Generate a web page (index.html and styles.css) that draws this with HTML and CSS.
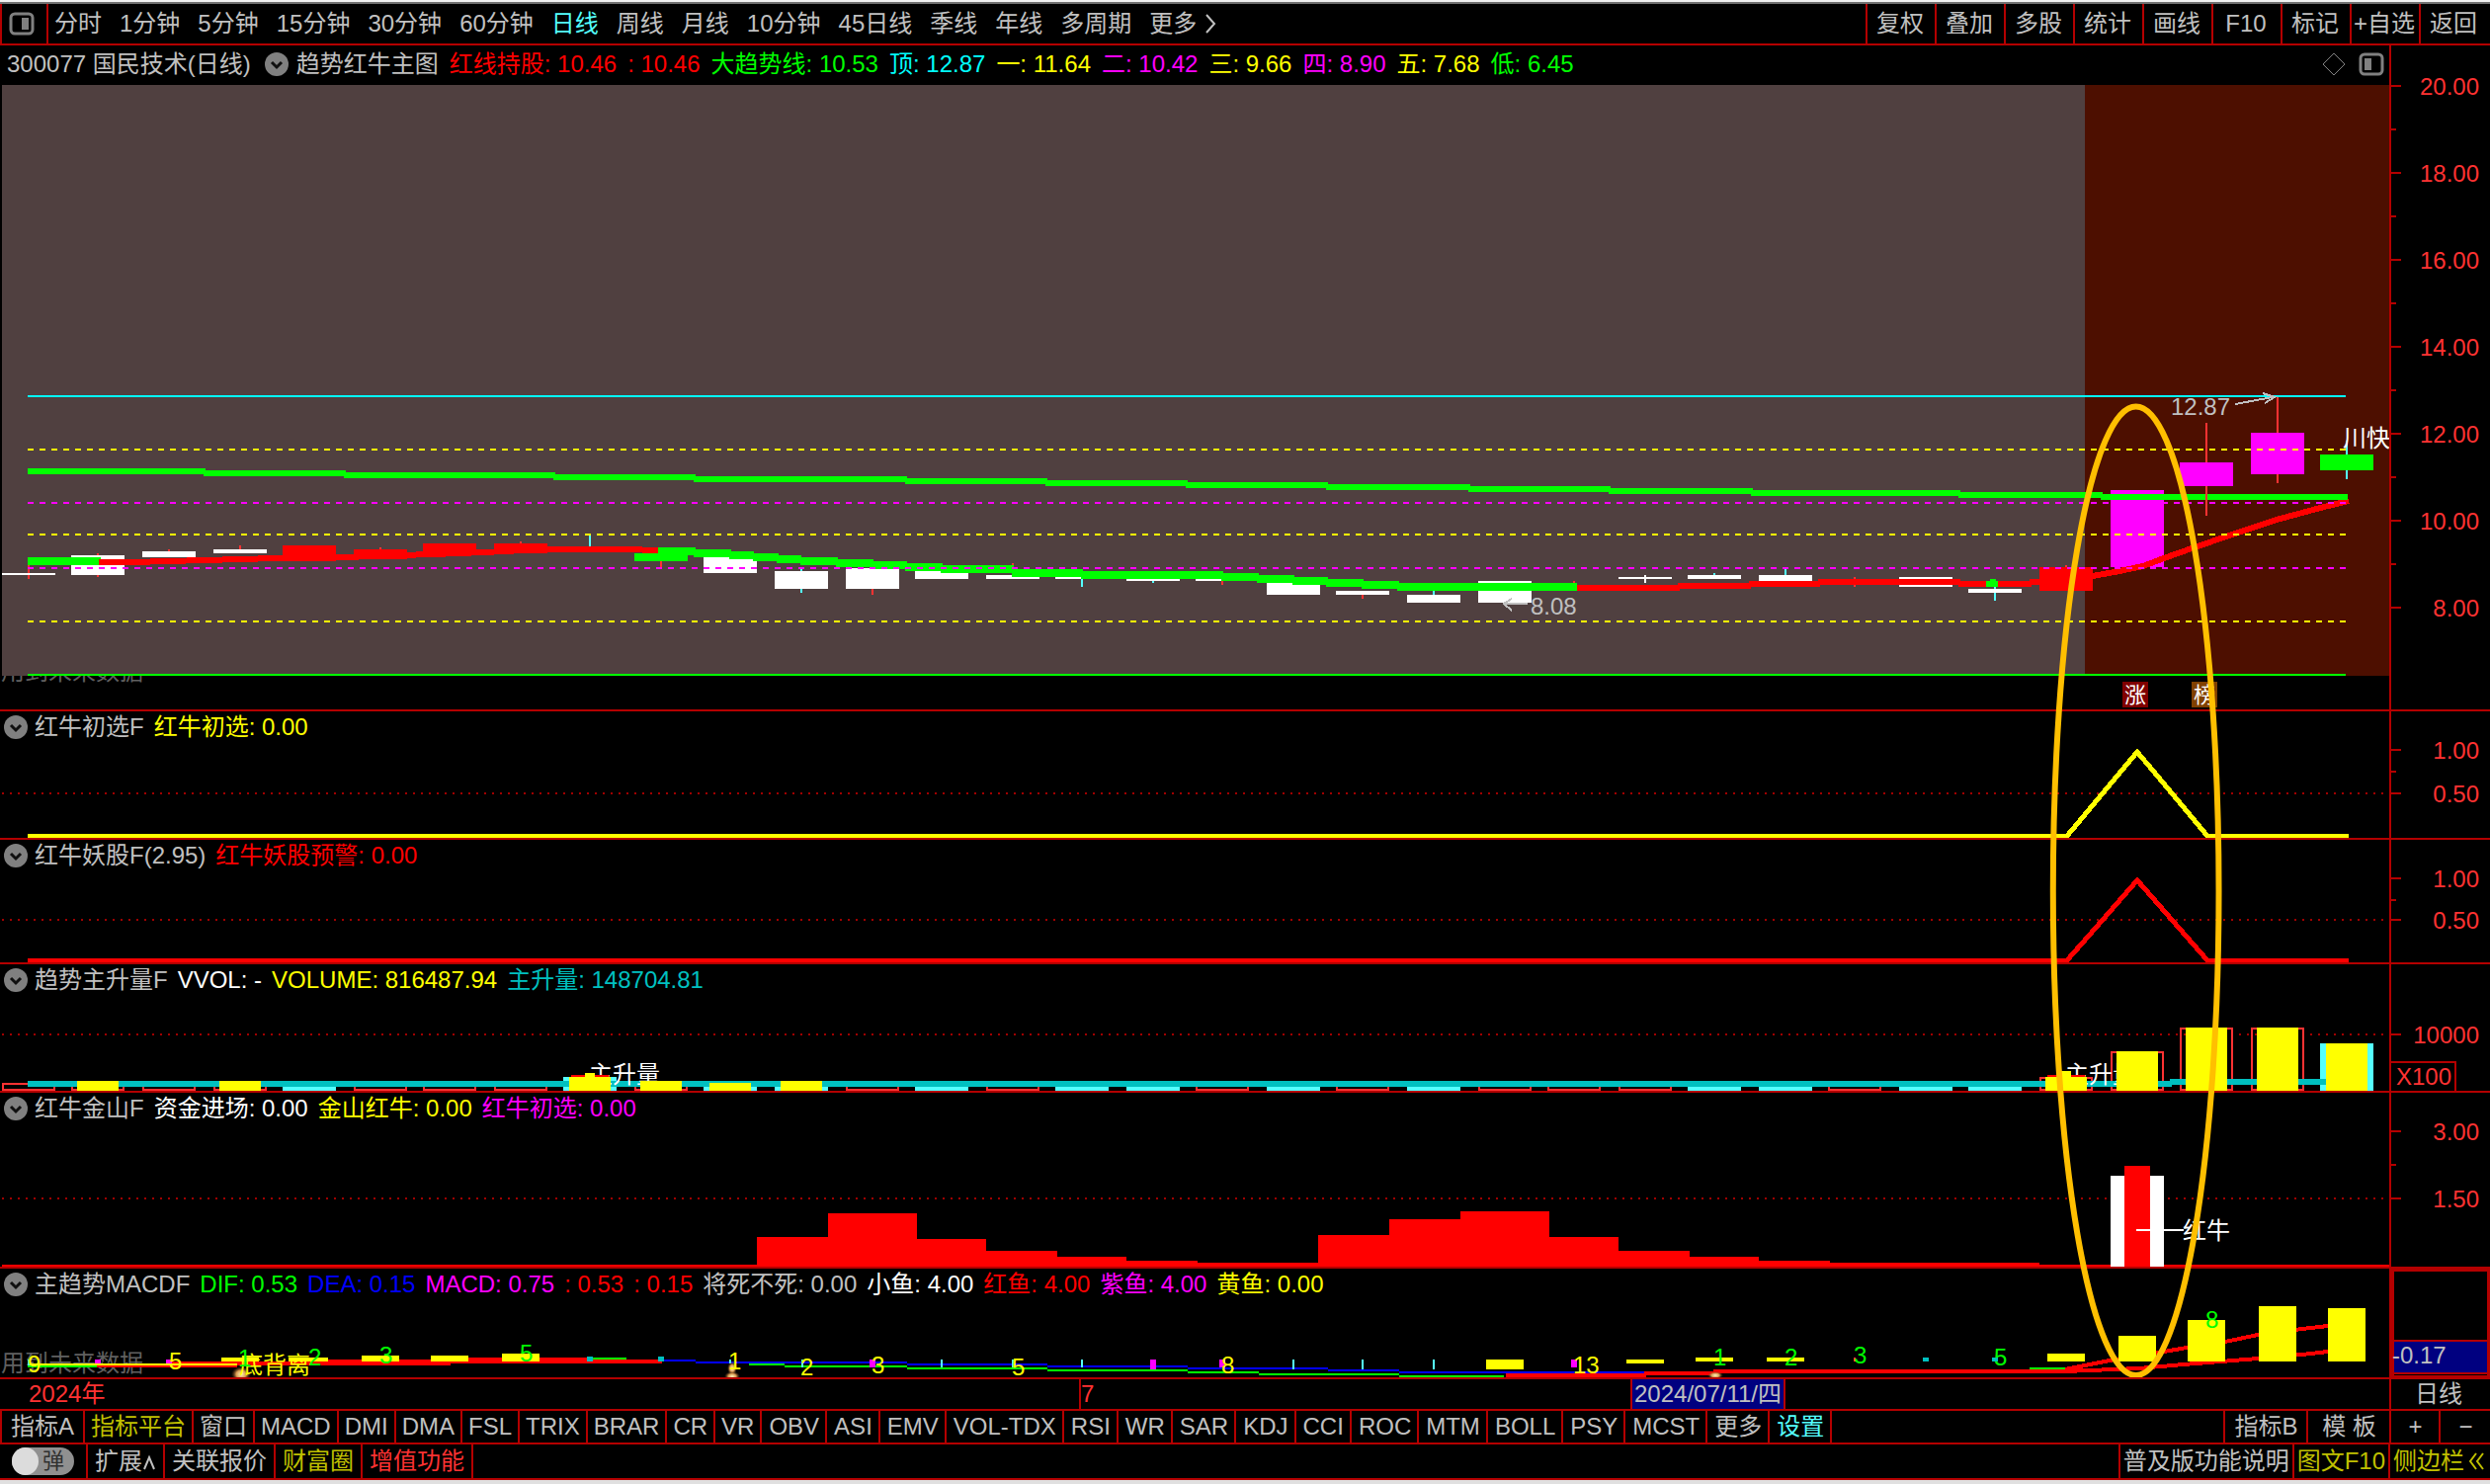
FILE: index.html
```html
<!DOCTYPE html>
<html lang="zh-CN">
<head>
<meta charset="utf-8">
<meta name="viewport" content="width=device-width, initial-scale=1">
<title>300077 国民技术 日线</title>
<link rel="stylesheet" href="styles.css">
</head>
<body>
<div class="app">
  <header class="toolbar">
    <button class="icon-cell" aria-label="侧栏">
      <svg class="dock-icon" viewBox="0 0 26 24"><rect x="2" y="2" width="22" height="20" rx="4"/><rect class="dock-fill" x="13" y="6" width="7" height="12"/></svg>
    </button>
    <nav class="periods" aria-label="周期">
      <button>分时</button><button>1分钟</button><button>5分钟</button><button>15分钟</button><button>30分钟</button><button>60分钟</button><button class="active">日线</button><button>周线</button><button>月线</button><button>10分钟</button><button>45日线</button><button>季线</button><button>年线</button><button>多周期</button><button class="more">更多<svg class="angle" viewBox="0 0 12 24"><path d="M2 3L10 12L2 21"/></svg></button>
    </nav>
    <div class="tools">
      <button>复权</button><button>叠加</button><button>多股</button><button>统计</button><button>画线</button><button>F10</button><button>标记</button><button>+自选</button><button>返回</button>
    </div>
  </header>

  <main class="charts">
    <section class="panel">
      <div class="plot">
        <div class="legend legend-main">
          <span>300077 国民技术(日线)</span>
          <button class="fold" aria-label="指标菜单"><svg viewBox="0 0 24 24"><circle cx="12" cy="12" r="12"/><path d="M7 10L12 15L17 10"/></svg></button>
          <span>趋势红牛主图</span>
          <span class="red">红线持股: 10.46</span><span class="red">: 10.46</span><span class="green">大趋势线: 10.53</span><span class="cyan">顶: 12.87</span><span class="yellow">一: 11.64</span><span class="magenta">二: 10.42</span><span class="yellow">三: 9.66</span><span class="magenta">四: 8.90</span><span class="yellow">五: 7.68</span><span class="green">低: 6.45</span>
          <span class="legend-tools">
            <svg class="diamond" viewBox="0 0 24 24"><path d="M12 1L23 12L12 23L1 12Z"/></svg>
            <svg class="dock-icon" viewBox="0 0 26 24"><rect x="2" y="2" width="22" height="20" rx="4"/><rect class="dock-fill" x="6" y="6" width="7" height="12"/></svg>
          </span>
        </div>
        <svg class="chart" viewBox="0 86 2418 632">
          <text class="mark" x="1" y="688">用到未来数据</text>
          <path fill="#504040" d="M2 86H2110V684H2z"/>
          <path fill="#4d0f00" d="M2110 86H2418V684H2110z"/>
          <!-- candle wicks -->
          <g class="wick-up"><path d="M29 568V586M99 560V584M171 556V560M243 552V558M385 554V560M527 548V556M669 560V575M883 590V602M1025 570V574M1237 586V592M1379 600V606M1593 588V592M1877 584V594M2091 572V580"/></g>
          <g class="wick-down"><path d="M597 542V554M811 576V600M1095 586V594M1167 586V590M1451 598V604M1735 580V584M1807 576V584M2019 594V608"/></g>
          <path stroke="#fff" stroke-width="2" d="M1665 582V590"/>
          <!-- flat session candles -->
          <path fill="#fff" d="M2 580h54v2H2zM72 562h54v20H72zM144 558h54v6h-54zM216 556h54v4h-54zM712 564h54v16h-54zM784 578h54v18h-54zM856 575h54v21h-54zM926 578h54v8h-54zM998 582h54v4h-54zM1068 582h54v4h-54zM1140 584h54v4h-54zM1210 584h54v4h-54zM1282 588h54v14h-54zM1352 598h54v4h-54zM1424 602h54v8h-54zM1496 588h54v22h-54zM1638 584h54v2h-54zM1708 582h54v4h-54zM1780 582h54v6h-54zM1922 584h54v10h-54zM1992 596h54v4h-54z"/>
          <path fill="#f00" d="M286 552h54v16h-54zM358 556h54v10h-54zM428 550h54v12h-54zM500 550h54v10h-54zM2064 574h54v24h-54z"/>
          <path fill="#0f0" d="M642 560h54v8h-54z"/>
          <path fill="#f0f" d="M2136 496h54v78h-54z"/>
          <!-- holding line -->
          <g class="line6">
            <path class="s-green8" d="M28 568H102"/>
            <path class="s-red" d="M100 569L134 569L207 567L280 565L350 564L404 562L438 561L490 559L530 557L562 556L634 556L666 557"/>
            <path class="s-green8" d="M666 558H704M702 560H740M738 562H763M762 564H788M786 566H811M810 568H848M846 570H884M882 572H918M916 574H954M952 576H1026M1024 580H1060M1058 580H1096M1094 582H1238M1236 584H1274M1272 586H1310M1308 588H1344M1342 590H1380M1378 592H1416M1414 594H1596"/>
            <path class="s-red" d="M1596 595H1700M1698 593H1772M1770 591H1842M1840 589H1984M1982 591H2056M2054 589H2066"/>
            <path class="s-red" d="M2118 583L2145 578L2169 573L2190 565L2221 554L2259 541L2304 526L2352 513L2377 507"/>
          </g>
          <path fill="#0f0" d="M2010 588h4v-2h6v2h2v6h-12z"/>
          <!-- long trend line -->
          <path class="s-green" d="M28 477H208M206 479H350M348 481H562M560 483H704M702 485H918M916 487H1060M1058 489H1202M1200 491H1344M1342 493H1488M1486 495H1630M1628 497H1774M1772 499H1984M1982 501H2128M2126 503H2376"/>
          <path stroke="#ff3232" stroke-width="2" d="M2233 428V522M2305 402V489"/>
          <path stroke="#54ffff" stroke-width="2" d="M2375 446V485"/>
          <path fill="#f0f" d="M2206 468h54v24h-54zM2278 438h54v42h-54z"/>
          <path fill="#0f0" d="M2348 460h54v16h-54z"/>
          <!-- price levels -->
          <g stroke-width="2" fill="none">
            <path stroke="#0ff" d="M28 401H2374"/>
            <path stroke="#ff0" stroke-dasharray="6 6" d="M28 455H2374M28 541H2374M28 629H2374"/>
            <path stroke="#f0f" stroke-dasharray="6 6" d="M28 509H2374M28 575H2374"/>
            <path stroke="#0f0" d="M28 683H2374"/>
          </g>
          <text class="silver" x="2197" y="420">12.87</text>
          <path class="arrow" d="M2262 409L2300 402M2290 398L2302 402L2292 408"/>
          <text class="silver" x="1549" y="622">8.08</text>
          <path class="arrow" d="M1546 611H1522M1530 606L1522 611L1530 618"/>
          <text class="white" x="2371" y="452">川快</text>
          <path fill="#800000" d="M2148 690h26v26h-26z"/><text class="badge-text" x="2150" y="711">涨</text>
          <path fill="#804000" d="M2218 690h26v26h-26z"/><text class="badge-text" x="2220" y="711">榜</text>
        </svg>
      </div>
      <div class="axis">
        <svg viewBox="0 46 100 672">
          <path class="tick" d="M0 87h10M0 175h10M0 263h10M0 351h10M0 439h10M0 527h10M0 615h10M0 131h5M0 219h5M0 307h5M0 395h5M0 483h5M0 571h5"/>
          <text x="89" y="96">20.00</text><text x="89" y="184">18.00</text><text x="89" y="272">16.00</text><text x="89" y="360">14.00</text><text x="89" y="448">12.00</text><text x="89" y="536">10.00</text><text x="89" y="624">8.00</text>
        </svg>
      </div>
    </section>

    <section class="panel">
      <div class="plot">
        <div class="legend">
          <button class="fold" aria-label="指标菜单"><svg viewBox="0 0 24 24"><circle cx="12" cy="12" r="12"/><path d="M7 10L12 15L17 10"/></svg></button>
          <span>红牛初选F</span><span class="yellow">红牛初选: 0.00</span>
        </div>
        <svg class="chart" viewBox="0 752 2418 96">
          <path class="dots" d="M2 803H2418"/>
          <path class="signal" stroke="#ff0" d="M28 846H2092L2163 761L2234 846H2377"/>
        </svg>
      </div>
      <div class="axis"><svg viewBox="0 720 100 128"><path class="tick" d="M0 759h10M0 803h10M0 781h5"/><text x="89" y="768">1.00</text><text x="89" y="812">0.50</text></svg></div>
    </section>

    <section class="panel">
      <div class="plot">
        <div class="legend">
          <button class="fold" aria-label="指标菜单"><svg viewBox="0 0 24 24"><circle cx="12" cy="12" r="12"/><path d="M7 10L12 15L17 10"/></svg></button>
          <span>红牛妖股F(2.95)</span><span class="red">红牛妖股预警: 0.00</span>
        </div>
        <svg class="chart" viewBox="0 882 2418 92">
          <path class="dots" d="M2 931H2418"/>
          <path class="signal" stroke="#f00" d="M28 972H2092L2163 891L2234 972H2377"/>
        </svg>
      </div>
      <div class="axis"><svg viewBox="0 850 100 124"><path class="tick" d="M0 889h10M0 931h10M0 911h5"/><text x="89" y="898">1.00</text><text x="89" y="940">0.50</text></svg></div>
    </section>

    <section class="panel">
      <div class="plot">
        <div class="legend">
          <button class="fold" aria-label="指标菜单"><svg viewBox="0 0 24 24"><circle cx="12" cy="12" r="12"/><path d="M7 10L12 15L17 10"/></svg></button>
          <span>趋势主升量F</span><span class="white">VVOL: -</span><span class="yellow">VOLUME: 816487.94</span><span class="teal">主升量: 148704.81</span>
        </div>
        <svg class="chart" viewBox="0 1008 2418 96">
          <path class="dots" d="M2 1047H2418"/>
          <g class="vol-up">
            <path d="M3 1097h52v6H3zM73 1097h52v6H73zM145 1097h52v6h-52zM217 1097h52v6h-52zM359 1097h52v6h-52zM429 1097h52v6h-52zM501 1097h52v6h-52zM643 1097h52v6h-52zM857 1097h52v6h-52zM999 1097h52v6h-52zM1211 1097h52v6h-52zM1353 1097h52v6h-52zM1497 1097h52v6h-52zM1567 1097h52v6h-52zM1639 1097h52v6h-52zM1851 1097h52v6h-52zM2065 1091h52v12h-52zM2137 1065h52v38h-52zM2207 1041h52v62h-52zM2279 1041h52v62h-52z"/>
          </g>
          <path fill="#54ffff" d="M286 1098h54v6h-54zM570 1090h54v14h-54zM712 1098h54v6h-54zM784 1098h54v6h-54zM926 1098h54v6h-54zM1068 1098h54v6h-54zM1140 1098h54v6h-54zM1282 1098h54v6h-54zM1424 1098h54v6h-54zM1708 1098h54v6h-54zM1780 1098h54v6h-54zM1922 1098h54v6h-54zM1992 1098h54v6h-54zM2348 1056h54v48h-54z"/>
          <path stroke="#00c0c0" stroke-width="6" d="M28 1097H2198M2196 1095H2356"/>
          <text class="white" x="596" y="1096">主升量</text>
          <text class="white" x="2090" y="1096">主升量</text>
          <path fill="#f00" d="M578 1088h38v3h-38zM2072 1088h38v3h-38z"/>
          <path fill="#ff0" d="M78 1094h42v10H78zM222 1094h42v10h-42zM576 1090h16v-4h10v4h16v14h-42zM648 1094h42v10h-42zM718 1096h42v8h-42zM790 1094h42v10h-42zM2070 1090h16v-6h10v6h16v14h-42zM2142 1064h42v40h-42zM2212 1040h42v64h-42zM2284 1040h42v64h-42zM2354 1056h42v48h-42z"/>
        </svg>
      </div>
      <div class="axis"><svg viewBox="0 976 100 128"><path class="tick" d="M0 1047h10M0 1075h65v30"/><text x="89" y="1056">10000</text><text x="61" y="1098">X100</text></svg></div>
    </section>

    <section class="panel">
      <div class="plot">
        <div class="legend">
          <button class="fold" aria-label="指标菜单"><svg viewBox="0 0 24 24"><circle cx="12" cy="12" r="12"/><path d="M7 10L12 15L17 10"/></svg></button>
          <span>红牛金山F</span><span class="white">资金进场: 0.00</span><span class="yellow">金山红牛: 0.00</span><span class="magenta">红牛初选: 0.00</span>
        </div>
        <svg class="chart" viewBox="0 1138 2418 144">
          <path class="dots" d="M2 1213H2418"/>
          <path fill="#f00" d="M2 1282V1280H766V1252H838V1228H928V1254H998V1266H1070V1272H1140V1276H1212V1278H1334V1250H1406V1234H1478V1226H1568V1252H1638V1266H1710V1272H1780V1276H1852V1278H2064V1280H2418V1282z"/>
          <path fill="#fff" d="M2136 1190h54v92h-54z"/>
          <path fill="#f00" d="M2150 1180h26v102h-26z"/>
          <path stroke="#fff" stroke-width="2" d="M2162 1245H2210"/>
          <text class="white" x="2209" y="1254">红牛</text>
        </svg>
      </div>
      <div class="axis"><svg viewBox="0 1106 100 176"><path class="tick" d="M0 1145h10M0 1213h10M0 1179h5"/><text x="89" y="1154">3.00</text><text x="89" y="1222">1.50</text></svg></div>
    </section>

    <section class="panel">
      <div class="plot">
        <div class="legend">
          <button class="fold" aria-label="指标菜单"><svg viewBox="0 0 24 24"><circle cx="12" cy="12" r="12"/><path d="M7 10L12 15L17 10"/></svg></button>
          <span>主趋势MACDF</span><span class="green">DIF: 0.53</span><span class="blue">DEA: 0.15</span><span class="magenta">MACD: 0.75</span><span class="red">: 0.53</span><span class="red">: 0.15</span><span>将死不死: 0.00</span><span class="white">小鱼: 4.00</span><span class="red">红鱼: 4.00</span><span class="magenta">紫鱼: 4.00</span><span class="yellow">黄鱼: 0.00</span>
        </div>
        <svg class="chart" viewBox="0 1316 2418 78">
          <defs><radialGradient id="spark"><stop offset="0" stop-color="#fff6c0"/><stop offset=".5" stop-color="#d89a50"/><stop offset="1" stop-color="#5a2a10" stop-opacity="0"/></radialGradient></defs>
          <text class="mark" x="1" y="1388">用到未来数据</text>
          <g fill="none" stroke-width="2">
            <path stroke="#0f0" d="M28 1383H98M600 1375H634M758 1381H794M794 1383H918M918 1385H1060M1060 1387H1202M1202 1389H1274M1274 1391H1416M1416 1393H1522M2054 1385H2092"/>
            <path stroke="#f00" d="M98 1383H240M172 1379H240"/>
            <path stroke="#00f" d="M670 1377H704M704 1379H918M918 1381H1060M1060 1383H1202M1202 1385H1344M1344 1387H1416M1416 1389H1664"/>
            <path stroke="#ff0" d="M28 1381H240"/>
          </g>
          <path fill="#f00" d="M240 1378H310V1376H474V1374H600V1376H670V1380H456V1382H240zM1524 1390H1664V1388H1734V1386H2092V1390H1734V1392H1666V1394H1524z"/>
          <g fill="none" stroke="#f00" stroke-width="4">
            <path d="M2090 1386L2135 1377L2190 1368L2213 1364L2257 1357L2285 1351L2330 1345L2356 1342"/>
            <path d="M2090 1388L2164 1385L2210 1381L2260 1377L2285 1375L2330 1371L2356 1368"/>
          </g>
          <path fill="#ff0" d="M224 1374h38v4h-38zM292 1374h40v4h-40zM366 1372h38v6h-38zM436 1372h38v6h-38zM508 1370h38v8h-38zM1504 1376h38v10h-38zM1646 1376h38v4h-38zM1716 1374h38v4h-38zM1788 1374h38v4h-38zM2072 1370h38v8h-38zM2144 1352h38v26h-38zM2214 1336h38v42h-38zM2286 1322h38v56h-38zM2356 1324h38v54h-38z"/>
          <path fill="#f0f" d="M96 1376h6v4h-6zM168 1376h6v4h-6zM880 1376h6v8h-6zM1164 1376h6v10h-6zM1234 1376h6v8h-6zM1590 1376h6v8h-6z"/>
          <path fill="#54ffff" d="M28 1376h2v6h-2zM738 1376h2v4h-2zM811 1376h2v8h-2zM952 1376h2v8h-2zM1024 1376h2v8h-2zM1094 1376h2v8h-2zM1308 1376h2v10h-2zM1378 1376h2v10h-2zM1450 1376h2v10h-2z"/>
          <path fill="#00c0c0" d="M594 1373h6v5h-6zM666 1373h6v5h-6zM1946 1374h6v4h-6zM2016 1374h6v4h-6z"/>
          <path fill="#ff3232" d="M1876 1374h2v4h-2z"/>
          <g fill="url(#spark)"><ellipse cx="244" cy="1391" rx="10" ry="8"/><ellipse cx="741" cy="1385" rx="5" ry="7"/><ellipse cx="741" cy="1393" rx="8" ry="5"/><ellipse cx="1736" cy="1392" rx="8" ry="4"/></g>
          <g class="yellow"><text x="28" y="1389">9</text><text x="171" y="1386">5</text><text x="242" y="1390">底背离</text><text x="737" y="1386">1</text><text x="810" y="1392">2</text><text x="882" y="1390">3</text><text x="1024" y="1392">5</text><text x="1236" y="1390">8</text><text x="1592" y="1390">13</text></g>
          <g class="green"><text x="241" y="1383">1</text><text x="312" y="1382">2</text><text x="384" y="1380">3</text><text x="526" y="1378">5</text><text x="1734" y="1382">1</text><text x="1806" y="1382">2</text><text x="1876" y="1380">3</text><text x="2018" y="1382">5</text><text x="2232" y="1344">8</text></g>
        </svg>
      </div>
      <div class="axis"><svg viewBox="0 1284 100 110"><rect x="1" y="1285" width="97" height="108" fill="none" stroke="#b40000" stroke-width="3"/><path fill="#000080" stroke="#b40000" stroke-width="2" d="M2 1357H98V1390H2z"/><text class="silver start" x="1" y="1380">-0.17</text></svg></div>
    </section>

    <svg class="annotation" viewBox="0 44 2520 1352" aria-hidden="true"><ellipse cx="2163" cy="903" rx="84" ry="491"/></svg>
  </main>

  <div class="timeline">
    <span class="year">2024年</span><span class="month">7</span><span class="cursor-date">2024/07/11/四</span><span class="period-name">日线</span>
  </div>

  <nav class="tabs" aria-label="指标">
    <button>指标A</button><button class="olive">指标平台</button><button>窗口</button><button>MACD</button><button>DMI</button><button>DMA</button><button>FSL</button><button>TRIX</button><button>BRAR</button><button>CR</button><button>VR</button><button>OBV</button><button>ASI</button><button>EMV</button><button>VOL-TDX</button><button>RSI</button><button>WR</button><button>SAR</button><button>KDJ</button><button>CCI</button><button>ROC</button><button>MTM</button><button>BOLL</button><button>PSY</button><button>MCST</button><button>更多</button><button class="aqua">设置</button>
    <span class="spacer"></span>
    <button class="wide">指标B</button><button class="wide">模 板</button><button class="zoom-btn" aria-label="放大">+</button><button class="zoom-btn" aria-label="缩小">−</button>
  </nav>

  <footer class="status">
    <label class="toggle"><input type="checkbox"><span class="knob"></span><span>弹</span></label>
    <button>扩展<svg class="caret" viewBox="0 0 14 24"><path d="M2 20L7 8L12 20"/></svg></button><button>关联报价</button><button class="olive">财富圈</button><button class="bright">增值功能</button>
    <span class="spacer"></span>
    <button class="tight">普及版功能说明</button><button class="olive tight">图文F10</button><button class="olive side">侧边栏<svg class="double" viewBox="0 0 18 24"><path d="M9 4L3 12L9 20M16 4L10 12L16 20"/></svg></button>
  </footer>
</div>
</body>
</html>
```
FILE: styles.css
```css
:root {
  --line: #b40000;
  --text: #c0c0c0;
}

* { box-sizing: border-box; }

body {
  margin: 0;
  background: #000;
  color: var(--text);
  font-family: "Liberation Sans", "Noto Sans CJK SC", sans-serif;
  font-size: 24px;
  line-height: 32px;
}

button {
  margin: 0;
  padding: 0;
  border: 0;
  background: none;
  color: inherit;
  font: inherit;
  white-space: nowrap;
}

svg { display: block; }

.app {
  border-top: 2px solid #f0f0f0;
  border-bottom: 4px solid #e0e0e0;
  overflow: hidden;
}

/* top toolbar */
.toolbar {
  display: flex;
  height: 42px;
  border-top: 2px solid #707070;
}

.icon-cell {
  width: 49px;
  padding-left: 7px;
  border-left: 2px solid var(--line);
  border-right: 2px solid var(--line);
}

.dock-icon {
  width: 26px;
  height: 24px;
  fill: none;
  stroke: #808080;
  stroke-width: 3;
}

.dock-icon .dock-fill { fill: #808080; stroke: none; }

.periods {
  display: flex;
  flex: 1;
  gap: 18px;
  padding-left: 6px;
}

.periods .active { color: #54ffff; }

.more { display: flex; align-items: center; gap: 8px; }

.angle { width: 12px; height: 24px; }

.angle, .caret, .double {
  fill: none;
  stroke: currentColor;
  stroke-width: 2;
}

.tools {
  display: grid;
  grid-template-columns: repeat(9, 70px);
  padding-right: 2px;
}

.tools button { padding-right: 2px; border-left: 2px solid var(--line); }

/* chart panels */
.charts { position: relative; }

.panel {
  display: grid;
  grid-template-columns: minmax(0, 2418fr) minmax(0, 102fr);
  border-top: 2px solid var(--line);
}

.axis {
  display: flex;
  align-items: flex-end;
  border-left: 2px solid var(--line);
}

.chart, .axis svg {
  width: 100%;
  height: auto;
  shape-rendering: crispEdges;
}

.axis text { fill: #ff3232; text-anchor: end; }
.axis .start { text-anchor: start; fill: var(--text); }
.tick { fill: none; stroke: var(--line); stroke-width: 2; }

.legend {
  display: flex;
  align-items: center;
  gap: 10px;
  height: 32px;
  padding-left: 4px;
  white-space: nowrap;
}

.legend .fold + span { margin-left: -3px; }

.legend-main { gap: 11px; height: 40px; padding: 0 0 2px 7px; }
.legend-main .fold { margin-left: 3px; }

.legend-tools {
  display: flex;
  gap: 13px;
  margin-left: auto;
  padding-right: 5px;
}

.diamond {
  width: 24px;
  height: 24px;
  fill: none;
  stroke: #808080;
  stroke-width: 1;
}

.fold svg { width: 24px; height: 24px; fill: #808080; }
.fold path { fill: none; stroke: #101010; stroke-width: 3; }

.red { color: #f00; fill: #f00; }
.green { color: #0f0; fill: #0f0; }
.cyan { color: #0ff; }
.yellow { color: #ff0; fill: #ff0; }
.magenta { color: #f0f; }
.blue { color: #00f; }
.teal { color: #00c0c0; }
.white { color: #fff; fill: #fff; }
.silver { fill: var(--text); }
.mark { fill: #606060; }
.badge-text { fill: #fff; font-size: 22px; }

.dots {
  fill: none;
  stroke: #a00000;
  stroke-width: 2;
  stroke-dasharray: 2 6;
}

.wick-up, .wick-down, .arrow, .vol-up { fill: none; stroke-width: 2; }
.wick-up, .vol-up { stroke: #ff3232; }
.wick-down { stroke: #54ffff; }
.arrow { stroke: var(--text); }

.line6, .s-green { fill: none; stroke-width: 6; }
.s-red { stroke: #f00; }
.s-green { stroke: #0f0; }
.s-green8 { stroke: #0f0; stroke-width: 8; }
.signal { fill: none; stroke-width: 5; }

.annotation {
  position: absolute;
  inset: 0;
  width: 100%;
  height: 100%;
  fill: none;
  stroke: #ffbf00;
  stroke-width: 6;
  pointer-events: none;
}

/* date scale */
.timeline {
  display: grid;
  grid-template-columns: minmax(0, 1092fr) minmax(0, 558fr) minmax(0, 768fr) minmax(0, 102fr);
  height: 32px;
  border-top: 2px solid var(--line);
  line-height: 30px;
  white-space: nowrap;
}

.year { padding-left: 29px; color: #ff3232; }
.month { border-left: 2px solid var(--line); color: #ff3232; }

.cursor-date {
  justify-self: start;
  padding: 0 2px;
  border: solid var(--line);
  border-width: 0 2px;
  background: #000080;
}

.period-name { padding-right: 4px; border-left: 2px solid var(--line); text-align: center; }

/* indicator tabs and status bar */
.tabs, .status {
  display: flex;
  border-top: 2px solid var(--line);
}

.tabs { height: 34px; }
.tabs button { padding: 0 6px; border-right: 2px solid var(--line); }
.tabs button:first-child { padding: 0 9px; border-left: 2px solid var(--line); }
.tabs button:nth-child(n+12) { padding: 0 6px 0 7px; }
.tabs .spacer { border-right: 2px solid var(--line); }
.tabs .wide { width: 84px; }
.tabs .zoom-btn { width: 50px; }
.tabs .zoom-btn:last-child { border-right: 0; }
.spacer { flex: 1; }

.status {
  height: 38px;
  border-bottom: 2px solid var(--line);
  line-height: 34px;
}

.status button {
  display: flex;
  align-items: center;
  padding: 0 7px;
  border-right: 2px solid var(--line);
}

.status .spacer { border-right: 2px solid var(--line); }
.status .tight { padding: 0 3px; }
.status .side { width: 101px; padding: 0 3px; border-right: 0; gap: 3px; }
.caret { width: 14px; height: 24px; }
.double { width: 18px; height: 24px; }

.toggle {
  display: flex;
  align-items: center;
  gap: 4px;
  width: 63px;
  height: 28px;
  margin: 3px 12px;
  border-radius: 14px;
  background: #909090;
  color: #303030;
  font-size: 22px;
}

.toggle input {
  position: absolute;
  opacity: 0;
}

.knob {
  width: 27px;
  height: 28px;
  border-radius: 50%;
  background: #dcdcdc;
}

.toggle + button { border-left: 2px solid var(--line); }

.olive { color: #c0c000; }
.aqua { color: #54ffff; }
.bright { color: #ff3232; }
```
